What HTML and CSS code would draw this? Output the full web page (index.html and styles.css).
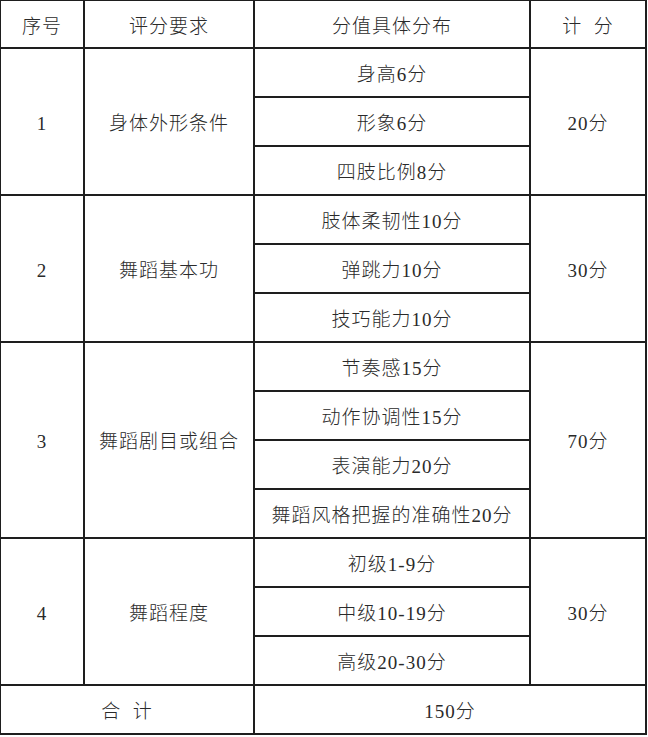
FILE: index.html
```html
<!DOCTYPE html>
<html lang="zh-CN">
<head>
<meta charset="utf-8">
<title>舞蹈评分标准</title>
<link rel="stylesheet" href="styles.css">
</head>
<body>
<table class="score">
  <colgroup>
    <col class="c1"><col class="c2"><col class="c3"><col class="c4">
  </colgroup>
  <tr class="head">
    <td>序号</td><td>评分要求</td><td>分值具体分布</td><td>计&nbsp;&nbsp;分</td>
  </tr>
  <tr><td rowspan="3">1</td><td rowspan="3">身体外形条件</td><td>身高6分</td><td rowspan="3">20分</td></tr>
  <tr><td>形象6分</td></tr>
  <tr><td>四肢比例8分</td></tr>
  <tr><td rowspan="3">2</td><td rowspan="3">舞蹈基本功</td><td>肢体柔韧性10分</td><td rowspan="3">30分</td></tr>
  <tr><td>弹跳力10分</td></tr>
  <tr><td>技巧能力10分</td></tr>
  <tr><td rowspan="4">3</td><td rowspan="4">舞蹈剧目或组合</td><td>节奏感15分</td><td rowspan="4">70分</td></tr>
  <tr><td>动作协调性15分</td></tr>
  <tr><td>表演能力20分</td></tr>
  <tr><td>舞蹈风格把握的准确性20分</td></tr>
  <tr><td rowspan="3">4</td><td rowspan="3">舞蹈程度</td><td>初级1-9分</td><td rowspan="3">30分</td></tr>
  <tr><td>中级10-19分</td></tr>
  <tr><td>高级20-30分</td></tr>
  <tr><td colspan="2">合&nbsp;&nbsp;计</td><td colspan="2">150分</td></tr>
</table>
</body>
</html>
```
FILE: styles.css
```css
html, body {
  margin: 0;
  padding: 0;
  background: #ffffff;
}
.score {
  border-collapse: collapse;
  table-layout: fixed;
  width: 646px;
  margin-left: -1px;
  font-family: "Liberation Serif", "Noto Sans CJK SC", serif;
  font-size: 19px;
  font-weight: 300;
  color: #2a2a2a;
  letter-spacing: 1px;
}
.c1 { width: 84px; }
.c2 { width: 170px; }
.c3 { width: 276px; }
.c4 { width: 116px; }
.score td {
  border: 2px solid #1e1e1e;
  text-align: center;
  vertical-align: middle;
  padding: 4px 0 0;
  height: 43px;
  line-height: 20px;
}
.score .head td {
  height: 41px;
  padding-top: 5px;
}
.score tr:first-child td {
  border-top: 1px solid #1e1e1e;
}
```
